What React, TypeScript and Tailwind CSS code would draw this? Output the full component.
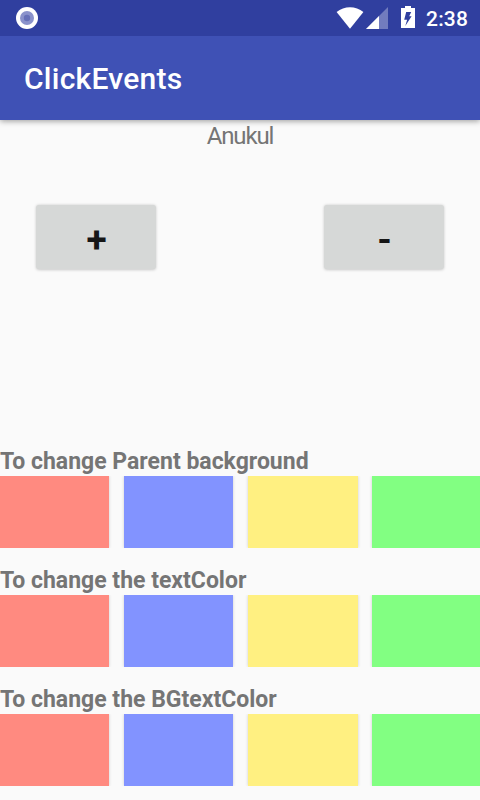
const swatches = [
  "w-[109px] bg-[#ff8a80]",
  "w-[109px] bg-[#8293ff] ml-[15px]",
  "w-[110px] bg-[#fff081] ml-[14.5px]",
  "w-[108px] bg-[#82ff82] ml-[14.5px]",
];

function StatusBar() {
  return (
    <div className="relative z-10 flex h-9 shrink-0 items-center bg-[#303f9f]">
      <svg className="ml-4" width="22" height="22" viewBox="0 0 22 22">
        <circle cx="11" cy="11" r="11" fill="#fff" />
        <circle cx="11" cy="11" r="7" fill="#8a92cb" />
        <circle cx="11" cy="11" r="3.2" fill="#6670b8" />
      </svg>
      <svg className="ml-auto" width="80" height="36" viewBox="336 0 80 36" fill="#fff">
        <path d="M336.6 12.1C344.2 5.6 355.8 5.6 363.4 12.1L350 28.7Z" />
        <path d="M388 7V29H366Z" fillOpacity=".32" />
        <path d="M379 16V29H366Z" />
        <path
          fillRule="evenodd"
          d="M405 6h6v2h4v20h-14V8h4ZM406.2 12L404.2 19.8H407.1L405.3 26L411.6 16.2H409.2L411.2 12Z"
        />
      </svg>
      <span className="ml-[10px] w-[54px] pt-px text-[21px] leading-6 font-medium tracking-[0.2px] whitespace-nowrap text-white">2:38</span>
    </div>
  );
}

function CountButton({ label }: { label: string }) {
  return (
    <button className="flex h-16 w-[120px] items-center justify-center rounded-[3px] bg-[#d6d8d7] pt-[5px] pl-px text-[37px] leading-[42px] font-bold text-[#161616] shadow-[0_0.5px_3px_rgba(0,0,0,0.2)]">
      {label}
    </button>
  );
}

function ColorSection({ title }: { title: string }) {
  return (
    <section className="mb-[14px]">
      <h2 className="h-[33px] pt-[4px] text-[23px] leading-[29px] font-bold whitespace-nowrap text-[#757575]">{title}</h2>
      <div className="flex h-[72px] overflow-hidden">
        {swatches.map((swatch) => (
          <button key={swatch} className={`h-full shrink-0 shadow-[0_0_3px_rgba(0,0,0,0.18)] ${swatch}`} />
        ))}
      </div>
    </section>
  );
}

export default function App() {
  return (
    <div className="flex h-[800px] w-[480px] flex-col overflow-hidden bg-[#fafafa] font-['Roboto',sans-serif]">
      <StatusBar />
      <header className="relative flex h-[84px] shrink-0 items-center bg-[#3f51b5] pt-[2px] pl-6 shadow-[0_1px_6px_rgba(0,0,0,0.4)]">
        <h1 className="text-[30px] leading-9 font-medium tracking-[0.25px] text-white">ClickEvents</h1>
      </header>
      <p className="mt-[2px] text-center text-[24px] leading-[28px] tracking-[-1.15px] text-[#757575]">Anukul</p>
      <div className="mt-[55px] flex justify-between px-9">
        <CountButton label="+" />
        <CountButton label="-" />
      </div>
      <div className="mt-[174px]">
        <ColorSection title="To change Parent background" />
        <ColorSection title="To change the textColor" />
        <ColorSection title="To change the BGtextColor" />
      </div>
    </div>
  );
}
